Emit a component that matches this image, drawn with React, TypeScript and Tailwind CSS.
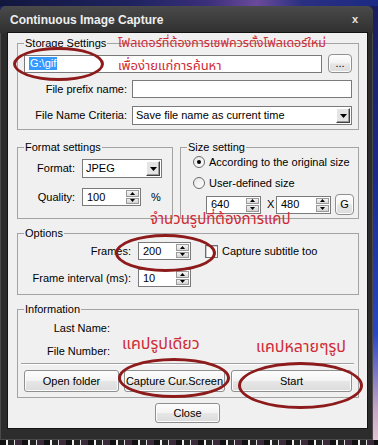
import React from "react";

const thai =
  "font-['Tahoma','Noto_Sans_Thai','Noto_Sans_Thai_UI','Loma','Garuda','Norasi','Kinnari','Waree','Liberation_Sans',sans-serif]";

function UpTri() {
  return (
    <svg width="5" height="3" viewBox="0 0 5 3">
      <path d="M0 3 L2.5 0 L5 3Z" fill="#000" />
    </svg>
  );
}
function DownTri({ w = 5, h = 3 }: { w?: number; h?: number }) {
  return (
    <svg width={w} height={h} viewBox={`0 0 ${w} ${h}`}>
      <path d={`M0 0 L${w / 2} ${h} L${w} 0Z`} fill="#000" />
    </svg>
  );
}

function Spinner() {
  return (
    <div className="flex flex-col w-[15px] h-full p-[1px] gap-[1px]">
      <div className="flex-1 flex items-center justify-center bg-gradient-to-b from-[#f6f6f6] to-[#dadada] border border-[#9a9a9a]">
        <UpTri />
      </div>
      <div className="flex-1 flex items-center justify-center bg-gradient-to-b from-[#f0f0f0] to-[#d2d2d2] border border-[#9a9a9a]">
        <DownTri />
      </div>
    </div>
  );
}

function SpinInput({ value, w }: { value: string; w: string }) {
  return (
    <div className={`${w} h-[18px] bg-white border border-[#7a7a7a] flex items-stretch`}>
      <div className="flex-1 flex items-center pl-[4px] leading-none">{value}</div>
      <Spinner />
    </div>
  );
}

function DropArrow() {
  return (
    <div className="w-[16px] h-full p-[1px]">
      <div className="w-full h-full flex items-center justify-center bg-[#e4e4e4] border border-t-white border-l-white border-b-[#404040] border-r-[#404040] shadow-[inset_-1px_-1px_0_#9a9a9a]">
        <DownTri w={7} h={4} />
      </div>
    </div>
  );
}

function Select({ value, w }: { value: string; w: string }) {
  return (
    <div className={`${w} h-[19px] bg-white border border-[#7a7a7a] flex items-stretch`}>
      <div className="flex-1 flex items-center pl-[3px] leading-none whitespace-nowrap overflow-hidden">{value}</div>
      <DropArrow />
    </div>
  );
}

function Btn({ children, className = "" }: { children: React.ReactNode; className?: string }) {
  return (
    <div
      className={`flex items-center justify-center rounded-[3px] border border-[#8f8f8f] bg-[linear-gradient(#fdfdfd,#f3f3f3_48%,#e6e6e6_52%,#dcdcdc)] shadow-[inset_0_0_0_1px_#fcfcfc] whitespace-nowrap leading-none ${className}`}
    >
      {children}
    </div>
  );
}

function Group({
  title,
  className = "",
  children,
}: {
  title: string;
  className?: string;
  children: React.ReactNode;
}) {
  return (
    <fieldset className={`border border-[#a3a3a3] m-0 p-0 min-w-0 ${className}`}>
      <legend className="ml-[6px] px-[1px] text-[11px] leading-[13px]">{title}</legend>
      {children}
    </fieldset>
  );
}

function Radio({ checked }: { checked?: boolean }) {
  return (
    <div className="w-[12px] h-[12px] rounded-full border border-[#6b6b6b] bg-gradient-to-br from-[#e6e6e6] to-white flex items-center justify-center">
      {checked && <div className="w-[4px] h-[4px] rounded-full bg-black" />}
    </div>
  );
}

export default function App() {
  return (
    <div className="relative w-[378px] h-[445px] overflow-hidden flex flex-col bg-[linear-gradient(180deg,#1a1f5a_0%,#1c2a8c_40%,#2a46c4_75%,#c9a6c6_92%,#e8c8d8_100%)] font-['Liberation_Sans',Arial,sans-serif] text-[11px] text-black">
      {/* desktop strip on top */}
      <div className="h-[6px] w-full shrink-0 bg-[linear-gradient(90deg,#12173e,#1e2360_35%,#3c2f7a_55%,#6a4a9a_68%,#2a2f80_80%,#1c2a84)]" />

      {/* window */}
      <div className="w-[373px] h-[434px] shrink-0 flex flex-col rounded-t-[6px] bg-[#2c2c2c] shadow-[inset_0_0_0_1px_#4a4a4a]">
        {/* title bar */}
        <div className="h-[27px] flex items-center justify-between pl-[10px] pr-[15px] rounded-t-[6px] bg-gradient-to-b from-[#4a4a4a] to-[#303030]">
          <span className="font-bold text-[12px] text-[#eeeeee] leading-none">Continuous Image Capture</span>
          <span className="text-[#e6e6e6] font-bold text-[11px] leading-none">x</span>
        </div>

        {/* client area */}
        <div className="ml-[8px] w-[359px] h-[395px] bg-[#f0f0f0] shadow-[0_0_0_1px_#141414] flex flex-col">
          {/* Storage settings */}
          <Group title="Storage Settings" className="ml-[9px] w-[342px] mt-[4px]">
            <div className="pt-[4px] px-[6px] pb-[4px] flex flex-col">
              <div className="flex items-center gap-[6px]">
                <div className="w-[298px] h-[18px] bg-white border border-[#7a7a7a] flex items-center pl-[4px]">
                  <span className="bg-[#3399ff] text-white leading-[13px] px-[1px]">G:\gif</span>
                </div>
                <Btn className="w-[24px] h-[19px] rounded-[4px]">...</Btn>
              </div>
              <div className="mt-[7px] flex items-center">
                <div className="w-[103px] text-right">File prefix name:</div>
                <div className="ml-[5px] flex-1 h-[18px] bg-white border border-[#7a7a7a]" />
              </div>
              <div className="mt-[8px] flex items-center">
                <div className="w-[103px] text-right whitespace-nowrap">File Name Criteria:</div>
                <div className="ml-[5px] flex-1">
                  <Select value="Save file name as current time" w="w-full" />
                </div>
              </div>
            </div>
          </Group>

          {/* Format / Size */}
          <div className="ml-[9px] w-[342px] mt-[11px] flex gap-[7px]">
            <Group title="Format settings" className="w-[156px]">
              <div className="pt-[5px] pb-[12px] flex flex-col">
                <div className="flex items-center">
                  <div className="w-[57px] text-right">Format:</div>
                  <div className="ml-[7px]">
                    <Select value="JPEG" w="w-[80px]" />
                  </div>
                </div>
                <div className="mt-[10px] flex items-center">
                  <div className="w-[57px] text-right">Quality:</div>
                  <div className="ml-[7px]">
                    <SpinInput value="100" w="w-[59px]" />
                  </div>
                  <div className="ml-[10px]">%</div>
                </div>
              </div>
            </Group>
            <Group title="Size setting" className="w-[179px]">
              <div className="pt-[1px] pb-[3px] flex flex-col">
                <div className="h-[14px] pl-[12px] flex items-center gap-[4px]">
                  <Radio checked />
                  <span>According to the original size</span>
                </div>
                <div className="mt-[7px] h-[14px] pl-[12px] flex items-center gap-[4px]">
                  <Radio />
                  <span>User-defined size</span>
                </div>
                <div className="mt-[4px] h-[21px] pl-[25px] flex items-center">
                  <SpinInput value="640" w="w-[55px]" />
                  <span className="ml-[6px] w-[7px]">X</span>
                  <div className="ml-[2px]">
                    <SpinInput value="480" w="w-[55px]" />
                  </div>
                  <Btn className="ml-[4px] w-[19px] h-[21px] rounded-[4px]">G</Btn>
                </div>
              </div>
            </Group>
          </div>

          {/* Options */}
          <Group title="Options" className="ml-[9px] w-[342px] mt-[8px]">
            <div className="pt-[2px] pb-[7px] flex flex-col">
              <div className="flex items-center">
                <div className="w-[113px] text-right">Frames:</div>
                <div className="ml-[7px]">
                  <SpinInput value="200" w="w-[53px]" />
                </div>
                <div className="ml-[14px] w-[13px] h-[13px] bg-white border border-[#6f6f6f] shadow-[inset_1px_1px_0_#c8c8c8]" />
                <span className="ml-[4px]">Capture subtitle too</span>
              </div>
              <div className="mt-[9px] flex items-center">
                <div className="w-[113px] text-right whitespace-nowrap">Frame interval (ms):</div>
                <div className="ml-[7px]">
                  <SpinInput value="10" w="w-[53px]" />
                </div>
              </div>
            </div>
          </Group>

          {/* Information */}
          <Group title="Information" className="ml-[9px] w-[342px] mt-[8px]">
            <div className="pt-[5px] pb-[5px] flex flex-col">
              <div className="h-[14px] flex items-center">
                <div className="w-[92px] text-right">Last Name:</div>
              </div>
              <div className="mt-[9px] h-[14px] flex items-center">
                <div className="w-[92px] text-right">File Number:</div>
              </div>
              <div className="mt-[5px] ml-[3px] mr-[4px] h-[2px] border-t border-[#a0a0a0] border-b border-b-white" />
              <div className="mt-[5px] px-[6px] flex">
                <Btn className="w-[95px] h-[22px]">Open folder</Btn>
                <Btn className="ml-[5px] w-[101px] h-[22px]">Capture Cur.Screen</Btn>
                <Btn className="ml-[6px] flex-1 h-[22px]">Start</Btn>
              </div>
            </div>
          </Group>

          <Btn className="mt-[5px] self-center w-[65px] h-[20px]">Close</Btn>
        </div>
      </div>

      {/* desktop strip at the bottom */}
      <div className="h-[5px] w-full shrink-0 bg-[repeating-linear-gradient(90deg,#111_0px,#111_6px,#eee_6px,#eee_8px,#222_8px,#222_14px,#ddd_14px,#ddd_15px,#3a2a3a_15px,#3a2a3a_22px)]" />

      {/* annotations */}
      <div className={`absolute left-[118px] top-[36px] text-[12.5px] leading-[16px] text-[#cf2a35] whitespace-nowrap ${thai}`}>
        โฟลเดอร์ที่ต้องการเซฟควรตั้งโฟลเดอร์ใหม่
      </div>
      <div className={`absolute left-[118px] top-[58px] text-[13px] leading-[16px] text-[#cf2a35] whitespace-nowrap ${thai}`}>
        เพื่อง่ายแก่การค้นหา
      </div>
      <div className={`absolute left-[150px] top-[211px] text-[15px] leading-[18px] text-[#cf2a35] whitespace-nowrap ${thai}`}>
        จำนวนรูปที่ต้องการแคป
      </div>
      <div className={`absolute left-[122px] top-[334px] text-[16px] leading-[20px] text-[#cf2a35] whitespace-nowrap ${thai}`}>
        แคปรูปเดียว
      </div>
      <div className={`absolute left-[256px] top-[337px] text-[16px] leading-[20px] text-[#cf2a35] whitespace-nowrap ${thai}`}>
        แคปหลายๆรูป
      </div>

      <div className="absolute left-[13px] top-[47px] w-[91px] h-[34px] rounded-[50%] border-[3px] border-[#8e1b1b]" />
      <div className="absolute left-[115px] top-[234px] w-[101px] h-[38px] rounded-[50%] border-[3px] border-[#8e1b1b]" />
      <div className="absolute left-[118px] top-[358px] w-[112px] h-[40px] rounded-[50%] border-[3px] border-[#8e1b1b]" />
      <div className="absolute left-[238px] top-[362px] w-[125px] h-[47px] rounded-[50%] border-[3px] border-[#8e1b1b]" />
    </div>
  );
}
